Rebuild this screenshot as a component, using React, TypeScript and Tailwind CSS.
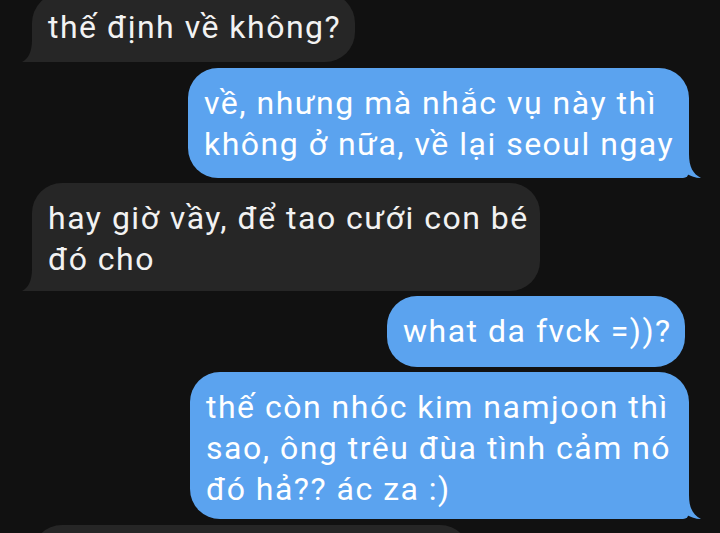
export default function App() {
  return (
    <div
      className="w-[720px] h-[533px] overflow-hidden bg-[#111111] text-white"
      style={{ fontFamily: "Roboto, 'Noto Sans', sans-serif" }}
    >
      <div className="flex flex-col -mt-[7px]">
        <Bubble side="left" width="w-[323px]" pad="pt-[14px] pb-[14px]" lines={["thế định về không?"]} />
        <Bubble
          side="right"
          width="w-[501px]"
          pad="mt-[6px] pt-[15px] pb-[13px]"
          lines={["về, nhưng mà nhắc vụ này thì", "không ở nữa, về lại seoul ngay"]}
        />
        <Bubble
          side="left"
          width="w-[508px]"
          pad="mt-[5px] pt-[15px] pb-[11px]"
          lines={["hay giờ vầy, để tao cưới con bé", "đó cho"]}
        />
        <Bubble
          side="right"
          width="w-[298px] !mr-[35px]"
          pad="mt-[5px] pt-[15px] pb-[15px]"
          lines={["what da fvck =))?"]}
          noTail
        />
        <Bubble
          side="right"
          width="w-[499px]"
          pad="mt-[5px] pt-[15px] pb-[9px]"
          lines={["thế còn nhóc kim namjoon thì", "sao, ông trêu đùa tình cảm nó", "đó hả?? ác za :)"]}
        />
        {/* next message, cut off by the bottom edge */}
        <div className="self-start ml-[32px] mt-[6px] w-[438px] h-[60px] rounded-[30px] bg-[#262626]" />
      </div>
    </div>
  );
}

function Bubble({
  side,
  width,
  pad,
  lines,
  noTail = false,
}: {
  side: "left" | "right";
  width: string;
  pad: string;
  lines: string[];
  noTail?: boolean;
}) {
  const left = side === "left";
  return (
    <div
      className={`relative shrink-0 ${width} ${pad} px-[16px] rounded-[30px] text-[32px] leading-[41px] tracking-[1.5px] whitespace-nowrap ${
        left ? "self-start ml-[32px] bg-[#262626] text-[#f2f2f2]" : "self-end mr-[31px] bg-[#5ba3ef] text-white"
      } ${!noTail && left ? "rounded-bl-[6px]" : ""} ${!noTail && !left ? "rounded-br-[6px]" : ""}`}
    >
      {lines.map((l, i) => (
        <div key={i}>{l}</div>
      ))}
      {!noTail && left && (
        <svg className="absolute left-[-10px] bottom-0" width="22" height="22" viewBox="0 0 22 22">
          <path d="M10 0 C10 12 6 19 0 22 L22 22 L22 0 Z" fill="#262626" />
        </svg>
      )}
      {!noTail && !left && (
        <svg className="absolute right-[-12px] bottom-0" width="24" height="24" viewBox="0 0 24 24">
          <path d="M12 0 C12 13 16 20 24 24 C18 24 14 22 10 20 C6 23 2 24 0 24 L0 0 Z" fill="#5ba3ef" />
        </svg>
      )}
    </div>
  );
}
